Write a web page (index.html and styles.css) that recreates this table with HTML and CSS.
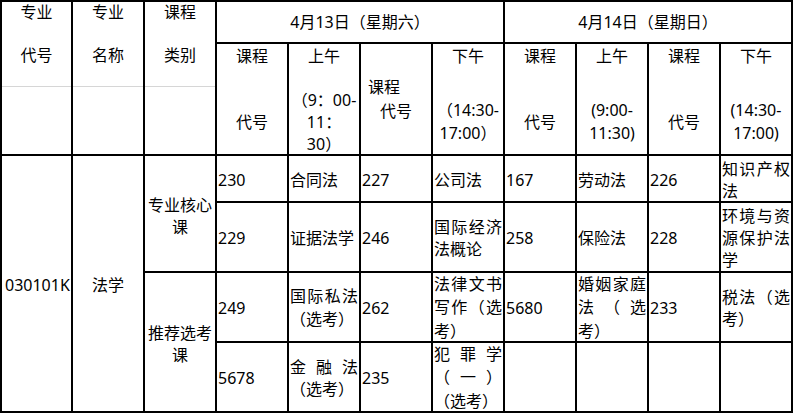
FILE: index.html
```html
<!DOCTYPE html>
<html lang="zh-CN">
<head>
<meta charset="utf-8">
<title>考试安排</title>
<link rel="stylesheet" href="styles.css">
</head>
<body>
<div class="sheet">
  <div class="hc c1"><div class="top">专业<br><br>代号</div><div class="bot"></div></div>
  <div class="hc c2"><div class="top">专业<br><br>名称</div><div class="bot"></div></div>
  <div class="hc c3"><div class="top">课程<br><br>类别</div><div class="bot"></div></div>
  <div class="d d1">4月13日（星期六）</div>
  <div class="d d2">4月14日（星期日）</div>

  <div class="h">课程<br><br><br>代号</div>
  <div class="h">上午<div class="t1">（9：00-<br>11：<br>30）</div></div>
  <div class="h mid"><div><span class="pr">课程</span><br>代号</div></div>
  <div class="h">下午<div class="t2">（14:30-<br>17:00）</div></div>
  <div class="h">课程<br><br><br>代号</div>
  <div class="h">上午<div class="t2">(9:00-<br>11:30)</div></div>
  <div class="h">课程<br><br><br>代号</div>
  <div class="h">下午<div class="t2">(14:30-<br>17:00)</div></div>

  <div class="c code">030101K</div>
  <div class="c name">法学</div>
  <div class="c cat cat1"><div>专业核心课</div></div>

  <div class="c"><div>230</div></div>
  <div class="c"><div>合同法</div></div>
  <div class="c"><div>227</div></div>
  <div class="c"><div>公司法</div></div>
  <div class="c"><div>167</div></div>
  <div class="c"><div>劳动法</div></div>
  <div class="c"><div>226</div></div>
  <div class="c"><div>知识产权法</div></div>

  <div class="c"><div>229</div></div>
  <div class="c"><div>证据法学</div></div>
  <div class="c"><div>246</div></div>
  <div class="c"><div>国际经济法概论</div></div>
  <div class="c"><div>258</div></div>
  <div class="c"><div>保险法</div></div>
  <div class="c"><div>228</div></div>
  <div class="c"><div>环境与资源保护法学</div></div>

  <div class="c cat cat2"><div>推荐选考课</div></div>

  <div class="c"><div>249</div></div>
  <div class="c lh"><div>国际私法（选考）</div></div>
  <div class="c"><div>262</div></div>
  <div class="c lh"><div>法律文书写作（选考）</div></div>
  <div class="c"><div>5680</div></div>
  <div class="c lh"><div>婚姻家庭法（选考）</div></div>
  <div class="c"><div>233</div></div>
  <div class="c"><div>税法（选考）</div></div>

  <div class="c"><div>5678</div></div>
  <div class="c"><div>金融法（选考）</div></div>
  <div class="c"><div>235</div></div>
  <div class="c lh"><div>犯罪学（一）（选考）</div></div>
  <div class="c"></div>
  <div class="c"></div>
  <div class="c"></div>
  <div class="c"></div>
</div>
</body>
</html>
```

FILE: styles.css
```css
html, body {
  margin: 0;
  padding: 0;
  background: #fff;
}

.sheet {
  display: grid;
  grid-template-columns: 69px repeat(10, 70px);
  grid-template-rows: 40px 110px 45px 68px 68px 68px;
  gap: 2px;
  padding: 2px;
  background: #000;
  width: max-content;
  font-family: "Noto Sans", "Noto Sans CJK SC", sans-serif;
  font-size: 16px;
  color: #000;
  text-spacing-trim: space-all;
}

.sheet > div {
  background: #fff;
  min-width: 0;
}

/* first three header columns */
.hc {
  grid-row: 1 / 3;
  display: flex;
  flex-direction: column;
  text-align: center;
}
.c1 { grid-column: 1; }
.c2 { grid-column: 2; }
.c3 { grid-column: 3; }
.hc .top {
  height: 84px;
  line-height: 21.5px;
}
.hc .bot {
  flex: 1;
  border-top: 1px solid #d6d6d6;
}

/* date headers */
.d {
  grid-row: 1;
  display: flex;
  align-items: center;
  justify-content: center;
  line-height: 22px;
}
.d1 { grid-column: 4 / 8; }
.d2 { grid-column: 8 / 12; }

/* sub headers */
.h {
  text-align: center;
  line-height: 22px;
  padding-top: 1px;
}
.h .t1 {
  margin-top: 22px;
}
.h .t2 {
  margin-top: 32px;
  line-height: 23px;
}
.h.mid {
  display: flex;
  flex-direction: column;
  justify-content: center;
  line-height: 24px;
  padding-top: 0;
}
.pr {
  padding-right: 24px;
}

/* body cells */
.c {
  display: flex;
  flex-direction: column;
  justify-content: center;
  padding: 2px 1px 0;
  text-align: justify;
  line-height: 22px;
}
.c > div {
  width: 100%;
}
.c.lh {
  line-height: 23.5px;
}
.code {
  grid-column: 1;
  grid-row: 3 / 7;
  padding-left: 3px;
  text-align: left;
}
.name {
  grid-column: 2;
  grid-row: 3 / 7;
  text-align: center;
}
.cat {
  grid-column: 3;
  text-align: center;
}
.cat1 {
  grid-row: 3 / 5;
  padding-top: 5px;
}
.cat2 {
  grid-row: 5 / 7;
  padding-top: 4px;
}
```
